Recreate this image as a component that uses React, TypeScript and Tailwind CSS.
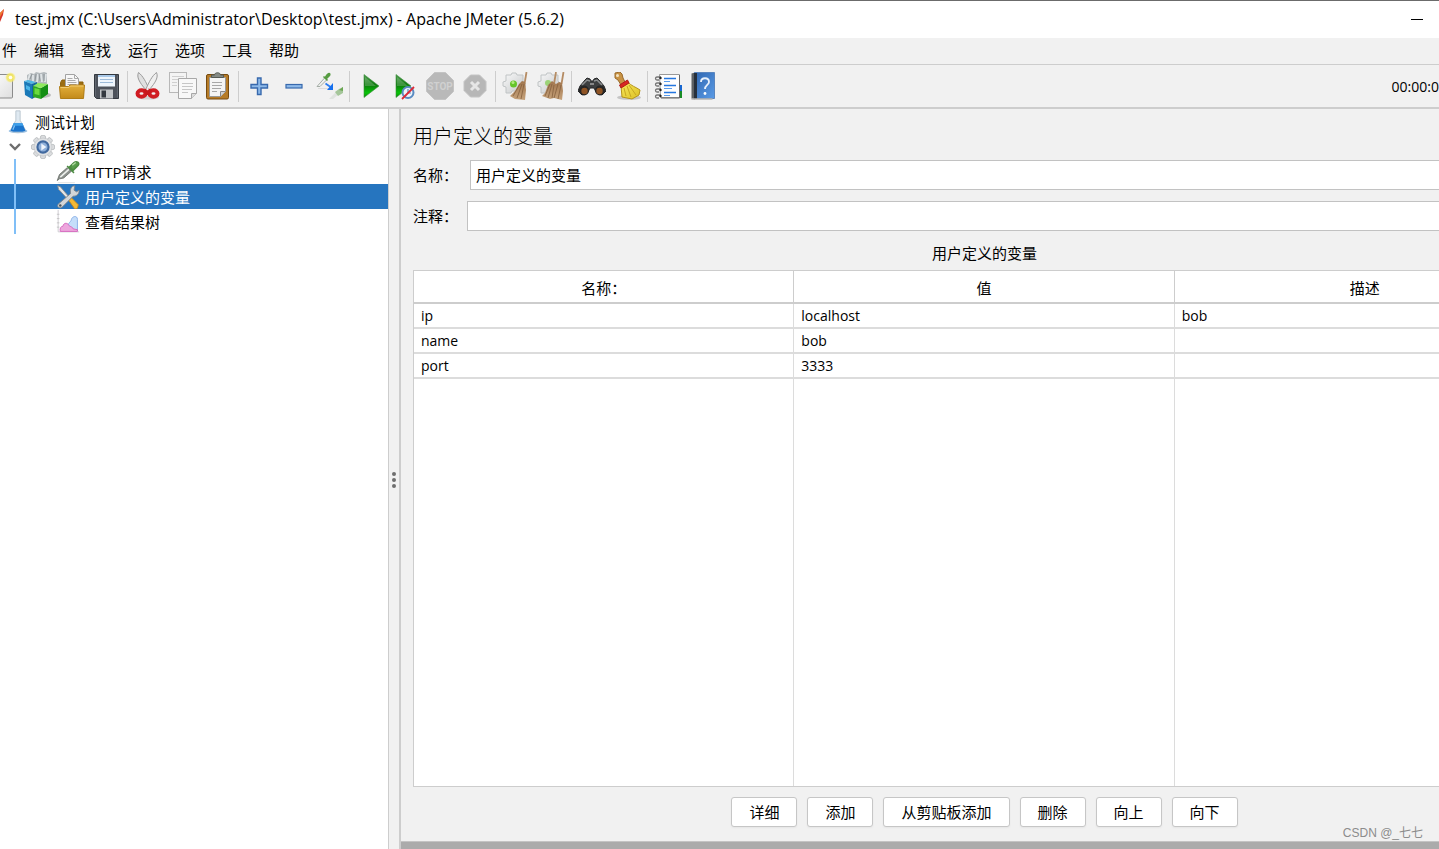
import React from "react";
import clsx from "clsx";

type IconProps = { children: React.ReactNode; className?: string };

const Icon = ({ children, className }: IconProps) => (
  <svg viewBox="0 0 28 28" className={clsx("shrink-0", className ?? "size-7")} fill="none" aria-hidden="true">
    {children}
  </svg>
);

const Gradients = () => (
  <svg width="0" height="0" className="absolute" aria-hidden="true">
    <defs>
      <linearGradient id="folder" x1="0" y1="0" x2="0" y2="1">
        <stop offset="0" stopColor="#e3b03c" />
        <stop offset="1" stopColor="#c38a1a" />
      </linearGradient>
      <linearGradient id="play" x1="0" y1="0" x2="0" y2="1">
        <stop offset="0" stopColor="#4c9a4c" />
        <stop offset="0.45" stopColor="#0d7a0d" />
        <stop offset="0.8" stopColor="#08c408" />
        <stop offset="1" stopColor="#0a8a0a" />
      </linearGradient>
      <linearGradient id="paper" x1="0" y1="0" x2="1" y2="1">
        <stop offset="0" stopColor="#ffffff" />
        <stop offset="1" stopColor="#dedede" />
      </linearGradient>
      <linearGradient id="book" x1="0" y1="0" x2="1" y2="1">
        <stop offset="0" stopColor="#2f66b0" />
        <stop offset="1" stopColor="#5a9be6" />
      </linearGradient>
      <linearGradient id="straw" x1="0" y1="0" x2="0" y2="1">
        <stop offset="0" stopColor="#a1764e" />
        <stop offset="1" stopColor="#c6a27a" />
      </linearGradient>
      <linearGradient id="gold" x1="0" y1="0" x2="1" y2="1">
        <stop offset="0" stopColor="#f8e85c" />
        <stop offset="1" stopColor="#dcc024" />
      </linearGradient>
      <linearGradient id="steel" x1="0" y1="0" x2="1" y2="1">
        <stop offset="0" stopColor="#fafafa" />
        <stop offset="1" stopColor="#c3c6c8" />
      </linearGradient>
      <radialGradient id="glow">
        <stop offset="0" stopColor="#ffffff" />
        <stop offset="0.35" stopColor="#f5e96a" />
        <stop offset="0.7" stopColor="#f4e75f" stopOpacity="0.8" />
        <stop offset="1" stopColor="#f8f0a0" stopOpacity="0" />
      </radialGradient>
    </defs>
  </svg>
);

const NewIcon = () => (
  <Icon>
    <rect x="1.5" y="2.5" width="23" height="23.5" rx="1" fill="url(#paper)" stroke="#8b8b8b" />
    <circle cx="22.500" cy="5.500" r="5.500" fill="url(#glow)" />
    <circle cx="22.500" cy="5.500" r="1.800" fill="#fffef0" />
  </Icon>
);

const TemplatesIcon = () => (
  <Icon>
    <ellipse cx="19" cy="23" rx="9" ry="3" fill="#888" opacity="0.5" />
    <path d="M4 9V3l4-2 3 1 2-2 4 1 4-1 3 1v13H5z" fill="#b4babd" />
    <path d="M5 8l2-6M10 10V3M14 10l1-8M19 10l-1-8M22 10l1-8" stroke="#dfe4e6" strokeWidth="1.800" />
    <path d="M7 7l2-5M12 9l1-7M17 9l-1-7M21 9V2" stroke="#868d92" strokeWidth="0.800" />
    <path d="M1 9l8 3v15l-7-4z" fill="#1a79b8" />
    <path d="M1 9l4-1 8 2-4 2z" fill="#4fb7e6" />
    <path d="M3 13l4 2v4l-4-2z" fill="#4ab5e8" />
    <path d="M9 12l5-2v14l-5 3z" fill="#1466a0" />
    <path d="M10 14l8 2v11l-8-2z" fill="#2fa624" />
    <path d="M18 16l7-4v10l-7 5z" fill="#148f14" />
    <path d="M10 14l5-3 10 1-7 4z" fill="#8eea5d" />
    <path d="M11.500 16l5 1.300v6l-5-1.300z" fill="#6ada3e" />
  </Icon>
);

const OpenIcon = () => (
  <Icon>
    <path d="M2.500 10.500L4 8h5l1 2h15v15H3z" fill="#9c6e13" stroke="#8c610b" />
    <path d="M7.500 2.500h9l4 4V18h-13z" fill="#f7f7f7" stroke="#a2a2a2" />
    <path d="M16.500 2.500v4h4M9.500 6.500h5M9.500 8.500h8M9.500 10.500h9M9.500 12.500h9" stroke="#aaa" />
    <path d="M1.500 14.500h9l1.500-1.500h14.500l-1 13.500h-23z" fill="url(#folder)" stroke="#b07d17" />
    <path d="M2.500 15.500h8.500l1.500-1.500h13" stroke="#f0cb70" />
  </Icon>
);

const SaveIcon = () => (
  <Icon>
    <path d="M1.500 2.500h24v24h-22l-2-2z" fill="#4d525b" stroke="#343940" />
    <rect x="5" y="3" width="17" height="11.500" fill="#eef5fc" />
    <path d="M5 4h17" stroke="#a8c8e8" strokeWidth="2" />
    <path d="M7 7.500h13M7 10.500h13" stroke="#9dbbd9" />
    <rect x="7" y="17.500" width="13" height="9" fill="#c3c6c9" />
    <rect x="8.500" y="18.500" width="4.500" height="7" fill="#343940" />
    <path d="M2.500 3.500v21M24.500 3.500v22" stroke="#686e77" strokeWidth="0.800" />
  </Icon>
);

const CutIcon = () => (
  <Icon>
    <ellipse cx="14" cy="25.500" rx="11" ry="2" fill="#999" opacity="0.35" />
    <path d="M4.500.5C2.500 5 5 10 12 18l3-1C12 10 9 4 4.500.5z" fill="#e0e0e0" stroke="#9a9a9a" />
    <path d="M22.500.5c2 4.500-.5 9.500-7.500 17.500l-3-1C15 10 18 4 22.500.5z" fill="#efefef" stroke="#9a9a9a" />
    <ellipse cx="7.500" cy="21.500" rx="4" ry="3.200" stroke="#d01c22" strokeWidth="4" />
    <ellipse cx="19.500" cy="21.500" rx="4" ry="3.200" stroke="#d01c22" strokeWidth="4" />
    <path d="M9 18l4.500-2 4.500 2-2.500 5h-4z" fill="#c8171c" />
    <circle cx="13.500" cy="17" r="1.200" fill="#eee" />
  </Icon>
);

const CopyIcon = () => (
  <Icon>
    <rect x="0.500" y="0.500" width="17" height="20" fill="#f4f4f4" stroke="#b8b8b8" />
    <path d="M3 4.500h12M3 7.500h12M3 10.500h5M3 13.500h5" stroke="#d0d0d0" />
    <path d="M9.500 6.500h18v15l-5 5h-13z" fill="#f8f8f8" stroke="#a8a8a8" />
    <path d="M13 11.500h11M13 14.500h11M13 17.500h10M13 20.500h6" stroke="#c6c6c6" />
    <path d="M22.500 26.500v-5h5" fill="#ddd" stroke="#a8a8a8" />
  </Icon>
);

const PasteIcon = () => (
  <Icon>
    <rect x="2.500" y="2.500" width="22" height="24.500" rx="1.500" fill="#b67b27" stroke="#764b10" />
    <path d="M5.500 5.500h16v14l-5 5h-11z" fill="#f5f5f5" stroke="#999" />
    <path d="M8 10.500h10M8 13.500h10M8 16.500h9M8 19.500h5" stroke="#a8a8a8" />
    <path d="M16.500 24.500v-5h5" fill="#d1d1d1" stroke="#888" />
    <path d="M7.500 5.500V3h3c0-3 6-3 6 0h3v2.500z" fill="#858a84" stroke="#555a54" />
  </Icon>
);

const PlusIcon = () => (
  <Icon>
    <path d="M12.500 6h3.500v6.500h6.500V16H16v6.500h-3.500V16H6v-3.500h6.500z" fill="#8db9e9" stroke="#3869ad" strokeWidth="1.400" />
  </Icon>
);

const MinusIcon = () => (
  <Icon>
    <rect x="6" y="12.500" width="16" height="3.500" fill="#8db9e9" stroke="#3869ad" strokeWidth="1.200" />
  </Icon>
);

const ToggleIcon = () => (
  <Icon>
    <path d="M3 16.500h13" stroke="#dcdcdc" />
    <path d="M2 14.500l8-9 2 2-7 7z" fill="#f0f2f0" stroke="#a5ada6" />
    <path d="M8.500 4.500l4 4M10 6l2-3c2-3 4-1 2 1l-3 3z" fill="#579c42" stroke="#579c42" strokeWidth="1.500" />
    <path d="M10.500 11.500l5 3.500" stroke="#2c7ef1" strokeWidth="1.800" />
    <path d="M18 11v7h-6z" fill="#1670ee" />
    <path d="M14 27l7-7 3 2-6 5z" fill="#dfe3df" />
    <path d="M20 20l4-3 4-2v6l-5 3z" fill="#a5c69a" />
    <path d="M24 18l4-3v4z" fill="#6ba653" />
  </Icon>
);

const PlayIcon = () => (
  <Icon>
    <path d="M8 2.500L23 14 8 25.500z" fill="url(#play)" stroke="#3e8e3e" strokeWidth="0.600" />
    <path d="M9 5l11 9H9z" fill="#fff" opacity="0.2" />
  </Icon>
);

const PlayNoTimersIcon = () => (
  <Icon>
    <path d="M5 2.500L20 14 5 25.500z" fill="url(#play)" stroke="#3e8e3e" strokeWidth="0.600" />
    <path d="M6 5l11 9H6z" fill="#fff" opacity="0.2" />
    <circle cx="17" cy="20.500" r="5.500" fill="#eef4fb" stroke="#5a8bc2" strokeWidth="2" />
    <path d="M17 17v4h3" stroke="#5a8bc2" strokeWidth="1.200" />
    <path d="M11 27l12-12" stroke="#dc2a36" strokeWidth="1.800" />
  </Icon>
);

const StopIcon = () => (
  <Icon>
    <path d="M8.500.5h11l8 8v11l-8 8h-11l-8-8v-11z" fill="#b9b9b9" stroke="#c4c4c4" />
    <text x="14" y="18" textAnchor="middle" fontSize="10" fontWeight="700" fill="#d0d0d0" fontFamily="Roboto">STOP</text>
  </Icon>
);

const ShutdownIcon = () => (
  <Icon>
    <path d="M9.500 3h9l6.500 6.500v9L18.500 25h-9L3 18.500v-9z" fill="#b7b7b7" stroke="#c4c4c4" />
    <path d="M10 10l8 8M18 10l-8 8" stroke="#e6e6e6" strokeWidth="3" />
  </Icon>
);

const Gear = () => (
  <path
    d="M4 3h5l1-2h4l1 2h6v6l2 2v4l-3 1v5h-6l-1-2h-3l-1 2H4v-6l-3-1v-4l3-1z"
    fill="url(#steel)"
    stroke="#c0c4c5"
  />
);

const ClearIcon = () => (
  <Icon>
    <Gear />
    <circle cx="11.500" cy="12" r="3.500" fill="#66c52a" />
    <circle cx="11" cy="10.500" r="1.500" fill="#b4eb83" />
    <path d="M24.500 0l-2 12" stroke="#b58c64" strokeWidth="1.800" />
    <path d="M17 12l3-3 3 1 1 8-1 10-10-1-5-3 5-5z" fill="url(#straw)" />
    <path d="M18 12l-7 12M20 12l-5 14M22 12l-3 15" stroke="#84603e" strokeWidth="0.800" />
  </Icon>
);

const ClearAllIcon = () => (
  <Icon>
    <Gear />
    <circle cx="11" cy="11" r="3" fill="#9cd377" />
    <path d="M19 0l-2 12M26.500 0l-2 12" stroke="#b58c64" strokeWidth="1.800" />
    <path d="M11 13l4-4 4 3 3-2 3 1 1 8-1 9-8-2-4 1-8-3 3-3z" fill="url(#straw)" />
    <path d="M13 12L8 24M15 12l-4 14M17 13l-2 13M21 12l-4 14M24 13l-3 14" stroke="#84603e" strokeWidth="0.800" />
  </Icon>
);

const SearchIcon = () => (
  <Icon>
    <path d="M2 14l5-6 2-2 3 1 1 2h2l1-2 3-1 2 2 5 6 2 5-4 4-6-3-2-4h-4l-2 4-6 3-4-4z" fill="#3d3f40" stroke="#262728" />
    <path d="M4 13l5-5 3 1M24 13l-5-5-3 1" stroke="#8d9091" strokeWidth="1.500" />
    <circle cx="6" cy="18.500" r="5" fill="#262626" />
    <circle cx="22" cy="18.500" r="5" fill="#262626" />
    <circle cx="6.500" cy="19" r="3.200" fill="#8e5324" />
    <circle cx="21.500" cy="19" r="3.200" fill="#8e5324" />
    <path d="M12 12h4" stroke="#888" strokeWidth="2" />
  </Icon>
);

const BroomIcon = () => (
  <Icon>
    <ellipse cx="16" cy="25.500" rx="12" ry="2.300" fill="#999" opacity="0.5" />
    <path d="M2 1l5-1 2 2 1 4 2 4-4 3-3-5-3-2z" fill="#c89345" stroke="#9a6a2a" />
    <circle cx="4.500" cy="3.500" r="1.500" fill="#f3e4c4" />
    <path d="M8 14l7-4c3 4 8 5 12 8l-1 5-7 4-10-2z" fill="url(#gold)" stroke="#b5941c" />
    <path d="M11 16l2 8M14 14l4 11M16 13l7 10" stroke="#c7a722" />
    <path d="M6.500 13l8-5 1.500 3-8 5z" fill="#d92722" stroke="#b01d1a" />
  </Icon>
);

const LogIcon = () => (
  <Icon>
    <path d="M25 13h3v6h-3z" fill="#1767d1" />
    <path d="M25 19h3v7h-3z" fill="#188c25" />
    <path d="M5.500 2.500h20v23h-19z" fill="#fdfdfd" stroke="#999" />
    <path d="M25.500 3v23H7" stroke="#666" />
    <path d="M10 6.500h12M10 13.500h12M10 20.500h12" stroke="#2476df" strokeWidth="1.600" />
    <path d="M10 9.500h6M10 16.500h8M10 23.500h6" stroke="#5a9ced" />
    {[5, 11, 17, 23].map((y) => (
      <g key={y}>
        <path d={`M7 ${y}H3c-2 0-2 3 0 3h2`} stroke="#777" strokeWidth="1.300" />
        <circle cx="6.500" cy={y + 1} r="1.200" fill="#222" />
      </g>
    ))}
  </Icon>
);

const HelpIcon = () => (
  <Icon>
    <path d="M2.500 1.500L6 .5v27l-3.500-1z" fill="#5c6063" />
    <path d="M5.500.5h20v26h-20z" fill="url(#book)" stroke="#5a86bf" />
    <path d="M5 1h3v26H5z" fill="#26303c" />
    <path d="M2.500 27h21" stroke="#b5b5b5" strokeWidth="1.500" />
    <path d="M12 10c0-5 8-5 8 0 0 3-4 3-4 7" stroke="#e9f1fb" strokeWidth="1.800" />
    <circle cx="16" cy="21.500" r="1.400" fill="#fff" />
  </Icon>
);

const FlaskIcon = () => (
  <Icon className="size-6">
    <ellipse cx="14" cy="24.500" rx="11" ry="2.500" fill="#6ca5d9" opacity="0.7" />
    <path d="M11.500 1h5v11l6 11c0 2-2 3-8.500 3s-8.500-1-8.500-3l6-11z" fill="#dfe9f1" stroke="#b4c2cc" />
    <path d="M9 15.500h10l3.500 8c0 1.500-3 2-8.500 2s-8.500-.5-8.500-2z" fill="#1b74cc" />
    <path d="M9 15.500h10l1.500 3h-13z" fill="#3fa0ea" />
    <path d="M10 18l-2 5" stroke="#7fc2f5" strokeWidth="1.500" />
  </Icon>
);

const ThreadGroupIcon = () => (
  <Icon className="size-6">
    <g stroke="#a9adb0" strokeWidth="0.800" fill="#dcdee0">
      {[0, 45, 90, 135].map((angle) => (
        <rect key={angle} x="11" y="0.500" width="6" height="27" rx="2" transform={`rotate(${angle} 14 14)`} />
      ))}
    </g>
    <circle cx="14" cy="14" r="10.500" fill="#e0e2e4" stroke="#c0c3c6" strokeWidth="0.800" />
    <circle cx="14" cy="14" r="6.500" fill="#8fb0da" stroke="#41699f" strokeWidth="2.500" />
    <path d="M12 10l6 4-6 4z" fill="#eef4fb" />
  </Icon>
);

const PipetteIcon = () => (
  <Icon className="size-6">
    <path d="M2 26.500h20" stroke="#ddd" />
    <path d="M1.500 24L4 17l9-8 5 4-9 8-5 1z" fill="#8d928e" stroke="#6a706b" />
    <path d="M5 20l10-9" stroke="#eef1ee" strokeWidth="1.800" />
    <path d="M13 7l8 8M16 8l5-5c3-2 7 0 5 3l-6 6z" fill="#579e4b" stroke="#4c8b42" strokeWidth="1.800" />
    <path d="M19 6l4-3" stroke="#b4dca5" strokeWidth="1.500" />
  </Icon>
);

const ToolsIcon = () => (
  <Icon className="size-6">
    <path d="M2 1l3 1 12 14-2 2L3 5z" fill="#e5e5e5" stroke="#8a8a8a" />
    <path d="M15 18l3-3 8 8-1 4-3 1z" fill="#f4b935" stroke="#c48a1e" />
    <path d="M3 22L17 10c-1-5 1-9 5-9l-1 5 3 2 3-2c0 5-3 7-7 7L7 26c-3 2-7-1-4-4z" fill="#d3d6d8" stroke="#7b8186" />
    <circle cx="5" cy="24" r="1.500" fill="#4d5357" />
  </Icon>
);

const ResultsIcon = () => (
  <Icon className="size-6">
    <path d="M2.500 0v25.500H27" stroke="#c9c6cd" />
    <path d="M1 5h3M1 10h3M1 15h3M1 20h3" stroke="#b5b5b5" strokeWidth="0.800" />
    <path d="M14 20c0-6 3-5 4-9s7-5 7 0v13h-9z" fill="#c5defa" stroke="#7fa8e4" />
    <path d="M5 25c-1-4 1-6 3-6 1-5 6-4 7-1 2 2 4 1 5 4l5 1v2z" fill="#eda6dd" stroke="#d460ba" />
  </Icon>
);

type Tool = { label: string; icon: () => React.ReactElement };

const toolGroups: Tool[][] = [
  [
    { label: "新建", icon: NewIcon },
    { label: "模板", icon: TemplatesIcon },
    { label: "打开", icon: OpenIcon },
    { label: "保存", icon: SaveIcon },
  ],
  [
    { label: "剪切", icon: CutIcon },
    { label: "复制", icon: CopyIcon },
    { label: "粘贴", icon: PasteIcon },
  ],
  [
    { label: "展开", icon: PlusIcon },
    { label: "折叠", icon: MinusIcon },
    { label: "切换", icon: ToggleIcon },
  ],
  [
    { label: "启动", icon: PlayIcon },
    { label: "不停顿开始", icon: PlayNoTimersIcon },
    { label: "停止", icon: StopIcon },
    { label: "关闭", icon: ShutdownIcon },
  ],
  [
    { label: "清除", icon: ClearIcon },
    { label: "清除全部", icon: ClearAllIcon },
  ],
  [
    { label: "搜索", icon: SearchIcon },
    { label: "重置搜索", icon: BroomIcon },
  ],
  [
    { label: "函数助手", icon: LogIcon },
    { label: "帮助", icon: HelpIcon },
  ],
];

const menus = ["件", "编辑", "查找", "运行", "选项", "工具", "帮助"];

const variables = [
  { name: "ip", value: "localhost", description: "bob" },
  { name: "name", value: "bob", description: "" },
  { name: "port", value: "3333", description: "" },
];

const actions = ["详细", "添加", "从剪贴板添加", "删除", "向上", "向下"];

const TitleBar = () => (
  <header className="flex h-[38px] shrink-0 items-center border-t border-[#6b6b6b] bg-white">
    <svg viewBox="0 0 4 14" className="mb-2 h-3.5 w-1" aria-hidden="true">
      <path d="M0 4L4 0 3 6 0 13z" fill="#d6342a" />
      <path d="M0 4L4 0 3 3 0 8z" fill="#ef7d32" />
    </svg>
    <h1 className="ml-[11px] pb-0.5 text-base leading-5 whitespace-nowrap">
      test.jmx (C:\Users\Administrator\Desktop\test.jmx) - Apache JMeter (5.6.2)
    </h1>
    <button aria-label="最小化" className="ml-auto flex h-full w-11 items-center justify-center">
      <span className="h-px w-3 bg-black" />
    </button>
  </header>
);

const MenuBar = () => (
  <nav className="flex h-[27px] shrink-0 items-center gap-[17px] border-b border-[#cdcdcd] pb-0.5 pl-0.5">
    {menus.map((menu) => (
      <button key={menu} className="whitespace-nowrap">
        {menu}
      </button>
    ))}
  </nav>
);

const ToolBar = () => (
  <div className="flex h-11 shrink-0 items-center overflow-hidden border-b-2 border-[#cdcdcd]">
    <div className="-ml-4 flex items-center">
      {toolGroups.map((group, i) => (
        <React.Fragment key={i}>
          {i > 0 && (
            <div className="flex w-1.5 justify-center">
              <span className="h-[31px] w-px bg-[#cdcdcd]" />
            </div>
          )}
          {group.map(({ label, icon: ToolIcon }) => (
            <button key={label} aria-label={label} className="flex w-[35px] justify-center">
              <ToolIcon />
            </button>
          ))}
        </React.Fragment>
      ))}
    </div>
    <span className="ml-auto pt-0.5 text-sm whitespace-nowrap">00:00:0</span>
  </div>
);

type TreeItemProps = {
  label: string;
  icon: React.ReactNode;
  selected?: boolean;
};

const TreeChild = ({ label, icon, selected }: TreeItemProps) => (
  <li
    role="treeitem"
    aria-selected={!!selected}
    className={clsx("flex h-[25px] items-center pl-3.5", selected && "bg-[#2675bf] text-white")}
  >
    <span className="mr-10 h-full w-0.5 bg-[#80bff7]" />
    {icon}
    <span className="ml-[5px]">{label}</span>
  </li>
);

const TestTree = () => (
  <aside className="w-[389px] shrink-0 border-r border-[#cdcdcd] bg-white">
    <ul role="tree">
      <li role="treeitem" className="flex h-[25px] items-center gap-[5px] pl-1.5">
        <FlaskIcon />
        测试计划
      </li>
      <li role="treeitem" aria-expanded="true" className="flex h-[25px] items-center pl-[9px]">
        <svg viewBox="0 0 12 8" className="mr-2.5 h-2 w-3" fill="none" aria-hidden="true">
          <path d="M1 1l5 5 5-5" stroke="#6e6e6e" strokeWidth="2.400" />
        </svg>
        <ThreadGroupIcon />
        <span className="ml-[5px]">线程组</span>
      </li>
      <TreeChild label="HTTP请求" icon={<PipetteIcon />} />
      <TreeChild label="用户定义的变量" icon={<ToolsIcon />} selected />
      <TreeChild label="查看结果树" icon={<ResultsIcon />} />
    </ul>
  </aside>
);

const Splitter = () => (
  <div className="flex w-3 shrink-0 flex-col items-center justify-center gap-0.5 border-r-2 border-[#cdcdcd] pt-0.5">
    {[0, 1, 2].map((dot) => (
      <span key={dot} className="size-1 rounded-full bg-[#6e6e6e]" />
    ))}
  </div>
);

const VariablesTable = () => (
  <table className="h-full w-full table-fixed border-separate border-spacing-0 border border-[#cdcdcd] bg-white text-left">
    <thead>
      <tr className="h-[33px]">
        {["名称：", "值", "描述"].map((column) => (
          <th
            key={column}
            className="border-r border-b-2 border-[#cdcdcd] p-0 pt-0.5 text-center font-normal last:border-r-0"
          >
            {column}
          </th>
        ))}
      </tr>
    </thead>
    <tbody className="text-sm">
      {variables.map((row) => (
        <tr key={row.name} className="h-[25px]">
          {[row.name, row.value, row.description].map((cell, i) => (
            <td key={i} className="border-r border-b-2 border-[#dcdcdc] px-[7px] py-0 last:border-r-0">
              {cell}
            </td>
          ))}
        </tr>
      ))}
      <tr>
        {[0, 1, 2].map((i) => (
          <td key={i} className="border-r border-[#dcdcdc] last:border-r-0" />
        ))}
      </tr>
    </tbody>
  </table>
);

// The panel is wider than the visible window, so it runs past the right edge.
const VariablesPanel = () => (
  <main className="flex min-w-0 flex-1 flex-col overflow-hidden">
    <div className="-mr-[117px] ml-3 flex min-h-0 flex-1 flex-col">
      <h2 className="mt-3.5 text-xl leading-7 font-light">用户定义的变量</h2>
      <div className="mt-[9px] flex items-center gap-3">
        <label htmlFor="name">名称：</label>
        <input
          id="name"
          defaultValue="用户定义的变量"
          className="h-[30px] flex-1 border border-[#c2c2c2] bg-white px-[5px] pb-0.5"
        />
      </div>
      <div className="mt-[11px] flex items-center gap-[9px]">
        <label htmlFor="comment">注释：</label>
        <input id="comment" className="h-[30px] flex-1 border border-[#c2c2c2] bg-white px-[5px]" />
      </div>
      <p className="mt-3 mb-[7px] text-center leading-5">用户定义的变量</p>
      <div className="min-h-0 flex-1">
        <VariablesTable />
      </div>
      <div className="mt-2.5 mb-3.5 flex justify-center gap-2.5">
        {actions.map((action) => (
          <button
            key={action}
            className="h-[30px] rounded-[3px] border border-[#c6c6c6] bg-white px-[17px] whitespace-nowrap shadow-xs"
          >
            {action}
          </button>
        ))}
      </div>
    </div>
    <div className="h-2 shrink-0 border-t border-[#c4c4c4] bg-[#ababab]" />
  </main>
);

export default function App() {
  return (
    <div className="relative flex h-screen flex-col overflow-hidden bg-[#f1f1f1] font-['Open_Sans','Noto_Sans_CJK_SC',sans-serif] text-[15px] leading-5 text-black">
      <Gradients />
      <TitleBar />
      <MenuBar />
      <ToolBar />
      <div className="flex min-h-0 flex-1">
        <TestTree />
        <Splitter />
        <VariablesPanel />
      </div>
      <span className="absolute right-4 bottom-1.5 font-['Liberation_Sans','Noto_Sans_CJK_SC',sans-serif] text-xs leading-5 text-[#8c8c8c]">
        CSDN @_七七
      </span>
    </div>
  );
}
